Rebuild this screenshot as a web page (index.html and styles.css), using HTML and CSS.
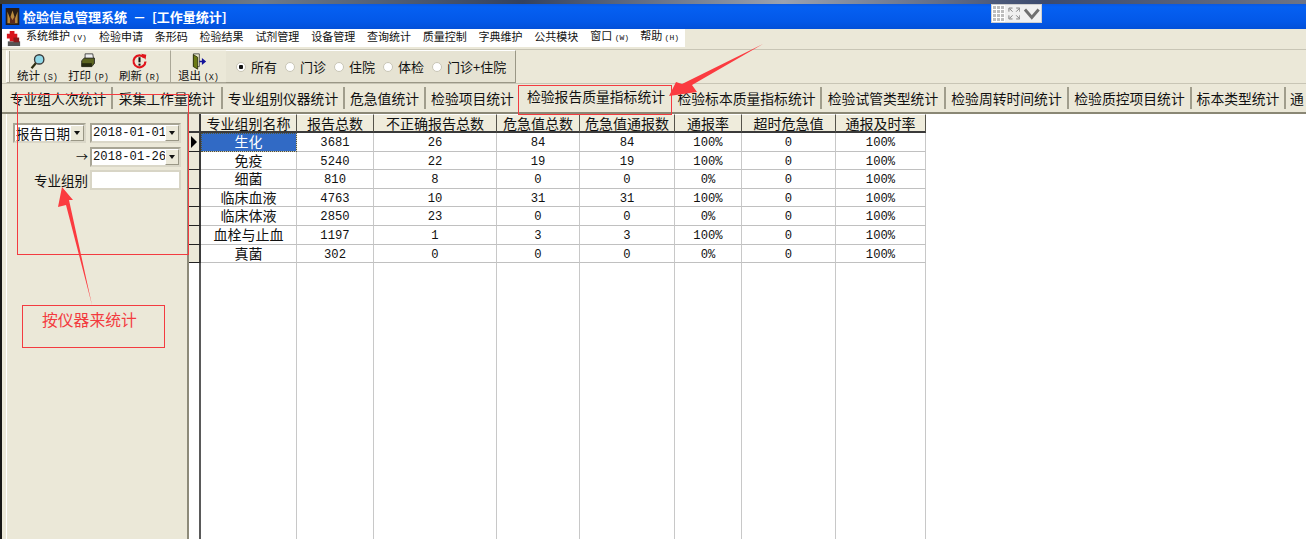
FILE: index.html
```html
<!DOCTYPE html>
<html lang="zh-CN">
<head>
<meta charset="utf-8">
<title>检验信息管理系统</title>
<link rel="stylesheet" href="styles.css">
</head>
<body>
<div class="desktop-strip"></div>
<div class="window">
  <header class="titlebar">
    <svg class="app-icon" viewBox="0 0 16 20"><rect width="16" height="20" fill="#2a1c14"/><path d="M2 18V4l3 8 3-9 3 9 3-8v14z" fill="#b98a3e"/><path d="M5 18V9l3 5 3-5v9z" fill="#5d2a1c"/></svg>
    <span class="title-text">检验信息管理系统 － [工作量统计]</span>
    <div class="float-widget">
      <span class="grip"></span>
      <svg class="widget-icon" viewBox="0 0 14 14"><path d="M1 5V1h4M9 1h4v4M13 9v4H9M5 13H1V9M2 2l3 3M12 2L9 5M12 12L9 9M2 12l3-3" fill="none" stroke="#777" stroke-width="1"/></svg>
      <svg class="widget-icon wide" viewBox="0 0 18 12"><path d="M2 2l7 8 7-8" fill="none" stroke="#6f6f6f" stroke-width="3"/></svg>
    </div>
  </header>

  <nav class="menubar">
    <svg class="menu-icon" viewBox="0 0 18 18"><rect x="3" y="12" width="13" height="5" fill="#555"/><path d="M5 1h5v3h3v5h-3v3H5V9H2V4h3z" fill="#d8141c"/><rect x="9" y="8" width="6" height="5" fill="#8b1a1a"/></svg>
    <span class="menu-item m1">系统维护 <small>(V)</small></span>
    <span class="menu-item">检验申请</span>
    <span class="menu-item">条形码</span>
    <span class="menu-item">检验结果</span>
    <span class="menu-item">试剂管理</span>
    <span class="menu-item">设备管理</span>
    <span class="menu-item">查询统计</span>
    <span class="menu-item">质量控制</span>
    <span class="menu-item">字典维护</span>
    <span class="menu-item">公共模块</span>
    <span class="menu-item m2">窗口 <small>(W)</small></span>
    <span class="menu-item">帮助 <small>(H)</small></span>
  </nav>

  <div class="toolbar">
    <div class="tool-group">
      <span class="handle"></span>
      <div class="tool">
        <svg class="tool-icon" viewBox="0 0 20 20"><circle cx="12" cy="7.5" r="5.5" fill="#8fd8e8" stroke="#3a3a3a" stroke-width="1.6"/><path d="M8 12l-5 6" stroke="#2c2c10" stroke-width="2.6"/></svg>
        <span class="tool-label">统计 <small>(S)</small></span>
      </div>
      <div class="tool">
        <svg class="tool-icon" viewBox="0 0 20 20"><path d="M6 1h9l1 6H6z" fill="#eee" stroke="#333"/><path d="M2 9l3-3h12v6l-3 4H2z" fill="#5b6420" stroke="#222"/><rect x="2" y="12" width="12" height="4" fill="#262a10"/></svg>
        <span class="tool-label">打印 <small>(P)</small></span>
      </div>
      <div class="tool">
        <svg class="tool-icon" viewBox="0 0 20 20"><path d="M15.5 5.5A7 7 0 1 0 17 10" fill="none" stroke="#e0141c" stroke-width="2.6"/><path d="M12 1l6 1-1 6z" fill="#e0141c"/><rect x="8.8" y="5" width="2.4" height="6" fill="#111"/><rect x="8.8" y="12.5" width="2.4" height="2.4" fill="#111"/></svg>
        <span class="tool-label">刷新 <small>(R)</small></span>
      </div>
    </div>
    <div class="tool-group exit-group">
      <div class="tool">
        <svg class="tool-icon" viewBox="0 0 20 20"><path d="M4 1h7v15H4z" fill="#e8e8c8" stroke="#444"/><path d="M4 2l5 3v14l-5-3z" fill="#6b7a14" stroke="#2b3008"/><path d="M11 9h3V6l5 4-5 4v-3h-3z" fill="#12129a"/></svg>
        <span class="tool-label">退出 <small>(X)</small></span>
      </div>
    </div>
    <div class="radio-panel">
      <label class="radio checked"><i></i>所有</label>
      <label class="radio"><i></i>门诊</label>
      <label class="radio"><i></i>住院</label>
      <label class="radio"><i></i>体检</label>
      <label class="radio"><i></i>门诊+住院</label>
    </div>
  </div>

  <div class="tabs">
    <span class="tab w1">专业组人次统计</span>
    <span class="tab w2">采集工作量统计</span>
    <span class="tab w3">专业组别仪器统计</span>
    <span class="tab w4">危急值统计</span>
    <span class="tab w5">检验项目统计</span>
    <span class="tab active">检验报告质量指标统计</span>
    <span class="tab w7">检验标本质量指标统计</span>
    <span class="tab w8">检验试管类型统计</span>
    <span class="tab w9">检验周转时间统计</span>
    <span class="tab w10">检验质控项目统计</span>
    <span class="tab w11">标本类型统计</span>
    <span class="tab last">通</span>
  </div>

  <main class="content">
    <aside class="filters">
      <div class="filter-row">
        <div class="combo type-combo"><span class="combo-text">报告日期</span><b class="drop"></b></div>
        <div class="combo date"><span class="combo-text">2018-01-01</span><b class="drop"></b></div>
      </div>
      <div class="filter-row">
        <span class="side-label arrow-label">→</span>
        <div class="combo date"><span class="combo-text">2018-01-26</span><b class="drop"></b></div>
      </div>
      <div class="filter-row">
        <span class="side-label">专业组别</span>
        <div class="combo date plain"></div>
      </div>
    </aside>

    <div class="grid">
      <div class="corner"></div>
      <div class="th">专业组别名称</div><div class="th">报告总数</div><div class="th">不正确报告总数</div><div class="th">危急值总数</div><div class="th">危急值通报数</div><div class="th">通报率</div><div class="th">超时危急值</div><div class="th">通报及时率</div>

      <div class="rh current"></div>
      <div class="td sel"><span>生化</span></div><div class="td num">3681</div><div class="td num">26</div><div class="td num">84</div><div class="td num">84</div><div class="td num">100%</div><div class="td num">0</div><div class="td num">100%</div>

      <div class="rh"></div>
      <div class="td">免疫</div><div class="td num">5240</div><div class="td num">22</div><div class="td num">19</div><div class="td num">19</div><div class="td num">100%</div><div class="td num">0</div><div class="td num">100%</div>

      <div class="rh"></div>
      <div class="td">细菌</div><div class="td num">810</div><div class="td num">8</div><div class="td num">0</div><div class="td num">0</div><div class="td num">0%</div><div class="td num">0</div><div class="td num">100%</div>

      <div class="rh"></div>
      <div class="td">临床血液</div><div class="td num">4763</div><div class="td num">10</div><div class="td num">31</div><div class="td num">31</div><div class="td num">100%</div><div class="td num">0</div><div class="td num">100%</div>

      <div class="rh"></div>
      <div class="td">临床体液</div><div class="td num">2850</div><div class="td num">23</div><div class="td num">0</div><div class="td num">0</div><div class="td num">0%</div><div class="td num">0</div><div class="td num">100%</div>

      <div class="rh"></div>
      <div class="td">血栓与止血</div><div class="td num">1197</div><div class="td num">1</div><div class="td num">3</div><div class="td num">3</div><div class="td num">100%</div><div class="td num">0</div><div class="td num">100%</div>

      <div class="rh"></div>
      <div class="td">真菌</div><div class="td num">302</div><div class="td num">0</div><div class="td num">0</div><div class="td num">0</div><div class="td num">0%</div><div class="td num">0</div><div class="td num">100%</div>

      <div class="rh-empty"></div>
      <div class="filler"></div><div class="filler"></div><div class="filler"></div><div class="filler"></div><div class="filler"></div><div class="filler"></div><div class="filler"></div><div class="filler"></div>
    </div>
  </main>
</div>

<div class="note box-filter"></div>
<div class="note box-tab"></div>
<div class="note box-text">按仪器来统计</div>
<svg class="arrows" viewBox="0 0 1306 539">
  <polygon points="62,187 73,200 69,200 92,305 66,205 58,207" fill="#fb3b40"/>
  <polygon points="763,44 692,85 697,92 669,96 676,82 682,84" fill="#fb3b40"/>
</svg>
</body>
</html>
```

FILE: styles.css
```css
* { box-sizing: border-box; }

html, body {
  margin: 0;
  height: 100%;
  overflow: hidden;
  background: #ebe8d8;
  font-family: "Noto Sans CJK SC", "Liberation Sans", sans-serif;
  color: #111;
}

body {
  display: flex;
  flex-direction: column;
  height: 539px;
}

small {
  font-family: "Liberation Mono", monospace;
  font-size: 8.5px;
}

.desktop-strip {
  height: 4px;
  flex: none;
  background: linear-gradient(90deg, #3a3a36, #6d7a8a 20%, #33415e 40%, #9aa2b0 60%, #3b4a6e 80%, #6d7486);
}

.window {
  flex: 1;
  min-height: 0;
  display: flex;
  flex-direction: column;
  border-left: 2px solid #161616;
}

/* Title bar */
.titlebar {
  flex: none;
  height: 25px;
  display: flex;
  align-items: center;
  gap: 3px;
  padding-left: 2px;
  background: linear-gradient(180deg, #0a58e0 0%, #0560f2 12%, #0358e8 70%, #0350d8 100%);
}

.app-icon { width: 15px; height: 17px; margin-left: 1px; flex: none; }

.title-text {
  width: 965px;
  font-size: 13px;
  font-weight: 700;
  word-spacing: 3px;
  color: #fff;
  white-space: nowrap;
}

.float-widget {
  width: 51px;
  height: 19px;
  margin-top: -6px;
  display: flex;
  align-items: center;
  background: #f0f0f0;
  border: 1px solid #cfcfcf;
}

.grip {
  width: 13px;
  height: 100%;
  background-color: #bdbdbd;
  background-image: linear-gradient(#fff 1px, transparent 1px), linear-gradient(90deg, #fff 1px, transparent 1px);
  background-size: 4px 4px;
}

.widget-icon { width: 13px; height: 13px; margin-left: 3px; }
.widget-icon.wide { width: 18px; margin-left: 3px; }

/* Menu */
.menubar {
  flex: none;
  height: 18px;
  display: flex;
  align-items: center;
  width: 683px;
  background: #fff;
  padding: 0 0 3px 3px;
  font-size: 11px;
  white-space: nowrap;
}

.menu-icon { width: 17px; height: 17px; flex: none; margin: 3px 4px 0 0; }
.menu-item { margin-right: 11.8px; line-height: 15px; flex: none; }
.menu-item small { font-size: 8px; }
.menu-item.m1 { width: 61.2px; }
.menu-item.m2 { width: 38.2px; }

/* Toolbar */
.toolbar {
  flex: none;
  height: 34px;
  margin-top: 2px;
  display: flex;
  align-items: stretch;
  padding-left: 4px;
  border-top: 1px solid #c8c5b5;
}

.tool-group {
  display: flex;
  align-items: stretch;
  border-top: 1px solid #f6f4ea;
  border-bottom: 1px solid #a8a595;
}

.tool-group:first-child { width: 164px; border-left: 1px solid #fff; }

.handle {
  width: 3px;
  margin-right: 2px;
  background: #f7f5ec;
  border-right: 1px solid #aaa797;
}

.tool {
  width: 51px;
  display: flex;
  flex-direction: column;
  align-items: center;
  font-size: 11.5px;
  white-space: nowrap;
}

.tool-icon { width: 17px; height: 17px; margin-top: 2px; flex: none; }
.tool-label { line-height: 14px; margin-top: -2px; }

.exit-group {
  width: 56px;
  border-left: 1px solid #aaa797;
  justify-content: center;
}

.radio-panel {
  width: 290px;
  display: flex;
  align-items: center;
  gap: 8px;
  padding-left: 10px;
  font-size: 13px;
  background: #e6e3d3;
  border-top: 1px solid #fff;
  border-right: 1px solid #9a9786;
  border-bottom: 1px solid #9a9786;
}

.radio { display: flex; align-items: center; gap: 5px; white-space: nowrap; }

.radio i {
  width: 10px;
  height: 10px;
  border-radius: 50%;
  background: #fff;
  border: 1px solid #c9c6b6;
  display: block;
}

.radio.checked i { background: radial-gradient(circle, #111 0 2px, #fff 2.5px); }

/* Tabs */
.tabs {
  flex: none;
  height: 31px;
  display: flex;
  align-items: flex-end;
  padding: 0 0 1px 3px;
  border-top: 1px solid #c8c5b5;
  border-bottom: 2px solid #8a8775;
  font-size: 13.8px;
  white-space: nowrap;
  overflow: hidden;
}

.tab {
  height: 22px;
  line-height: 22px;
  text-align: center;
  border-right: 2px solid #a09d8c;
  flex: none;
  margin-bottom: 2px;
}

.w1 { width: 108px; }
.w2 { width: 110px; }
.w3 { width: 122px; }
.w4 { width: 81px; }
.w5 { width: 93px; border-right: none; }
.tab.active { width: 154px; height: 28px; line-height: 25px; background: #ebe8d8; border: none; margin-bottom: -1px; }
.w7 { width: 149px; }
.w8 { width: 124px; }
.w9 { width: 123px; }
.w10 { width: 123px; }
.w11 { width: 94px; }
.last { width: 20px; border: none; text-align: left; padding-left: 4px; }

/* Body */
.content {
  flex: 1;
  min-height: 0;
  display: flex;
}

.filters {
  width: 187px;
  flex: none;
  display: flex;
  flex-direction: column;
  gap: 3.5px;
  padding: 9px 0 0 7px;
  background: #ebe8d8;
  border-left: 4px solid #ebe8d8;
  border-right: 2px solid #8d8a79;
  box-shadow: inset 1px 0 0 #fff;
  font-size: 13.5px;
}

.filter-row {
  display: flex;
  justify-content: flex-end;
  align-items: center;
  gap: 2px;
  padding-right: 6px;
}

.combo {
  height: 20px;
  display: flex;
  align-items: center;
  background: #fff;
  border: 2px solid #a7a494;
  border-right-color: #dad7c8;
  border-bottom-color: #dad7c8;
  overflow: hidden;
}

.type-combo { width: 73px; margin-right: 2px; padding-left: 1px; flex: none; }
.date { width: 91px; flex: none; }
.plain { background: #fff; border-color: #d8d5c6; }

.combo-text { flex: 1; min-width: 0; overflow: hidden; white-space: nowrap; line-height: 16px; }
.date .combo-text { font-family: "Liberation Mono", monospace; font-size: 12.2px; padding-left: 1px; }

.drop {
  width: 14px;
  height: 16px;
  flex: none;
  position: relative;
  background: #ebe8d8;
  border: 1px solid #9a9786;
  border-left-color: #fff;
  border-top-color: #fff;
}

.drop::after {
  content: "";
  position: absolute;
  left: 3px;
  top: 5px;
  border: 3px solid transparent;
  border-top: 4px solid #111;
  border-bottom: 0;
}

.side-label { white-space: nowrap; }
.arrow-label { font-size: 12px; }

/* Data grid */
.grid {
  flex: 1;
  min-width: 0;
  display: grid;
  grid-template-columns: 12px 96px 77px 123px 83px 95px 67px 94px 90px;
  grid-template-rows: 19px repeat(7, 18.6px) 1fr;
  justify-content: start;
  background: #fff;
  font-size: 14px;
}

.corner, .rh {
  background: #ebe8d8;
  border-right: 2px solid #3a3a3a;
  border-bottom: 1px solid #222;
}

.corner { border-bottom: 2px solid #3a3a3a; }

.rh.current { position: relative; }
.rh.current::after {
  content: "";
  position: absolute;
  left: 2px;
  top: 3px;
  border: 6px solid transparent;
  border-left: 6px solid #000;
  border-right: 0;
}

.rh-empty { border-right: 2px solid #5a5a5a; background: #fff; }

.th {
  background: #efecdc;
  text-align: center;
  line-height: 17px;
  border-top: 1px solid #fff;
  border-right: 1px solid #55534a;
  border-bottom: 2px solid #3a3a3a;
  white-space: nowrap;
}

.td {
  text-align: center;
  line-height: 17px;
  border-right: 1px solid #c8c8c8;
  border-bottom: 1px solid #c0c0c0;
  white-space: nowrap;
}

.num { font-family: "Liberation Mono", monospace; font-size: 12.2px; line-height: 20px; }

.td.sel {
  background: #316ac5;
  color: #fff;
  outline: 1px dotted #553;
  outline-offset: -1px;
}

.filler { border-right: 1px solid #c8c8c8; }

/* Annotations drawn over the screenshot */
.note { position: absolute; border: 1px solid #f33b40; }
.box-filter { left: 17px; top: 94px; width: 172px; height: 161px; }
.box-tab { left: 518px; top: 85px; width: 154px; height: 30px; }
.box-text {
  left: 22px;
  top: 305px;
  width: 143px;
  height: 43px;
  padding: 3px 0 0 19px;
  color: #f33b40;
  font-size: 15.8px;
  line-height: 22px;
  white-space: nowrap;
}

.arrows {
  position: absolute;
  left: 0;
  top: 0;
  width: 1306px;
  height: 539px;
  pointer-events: none;
}
```
